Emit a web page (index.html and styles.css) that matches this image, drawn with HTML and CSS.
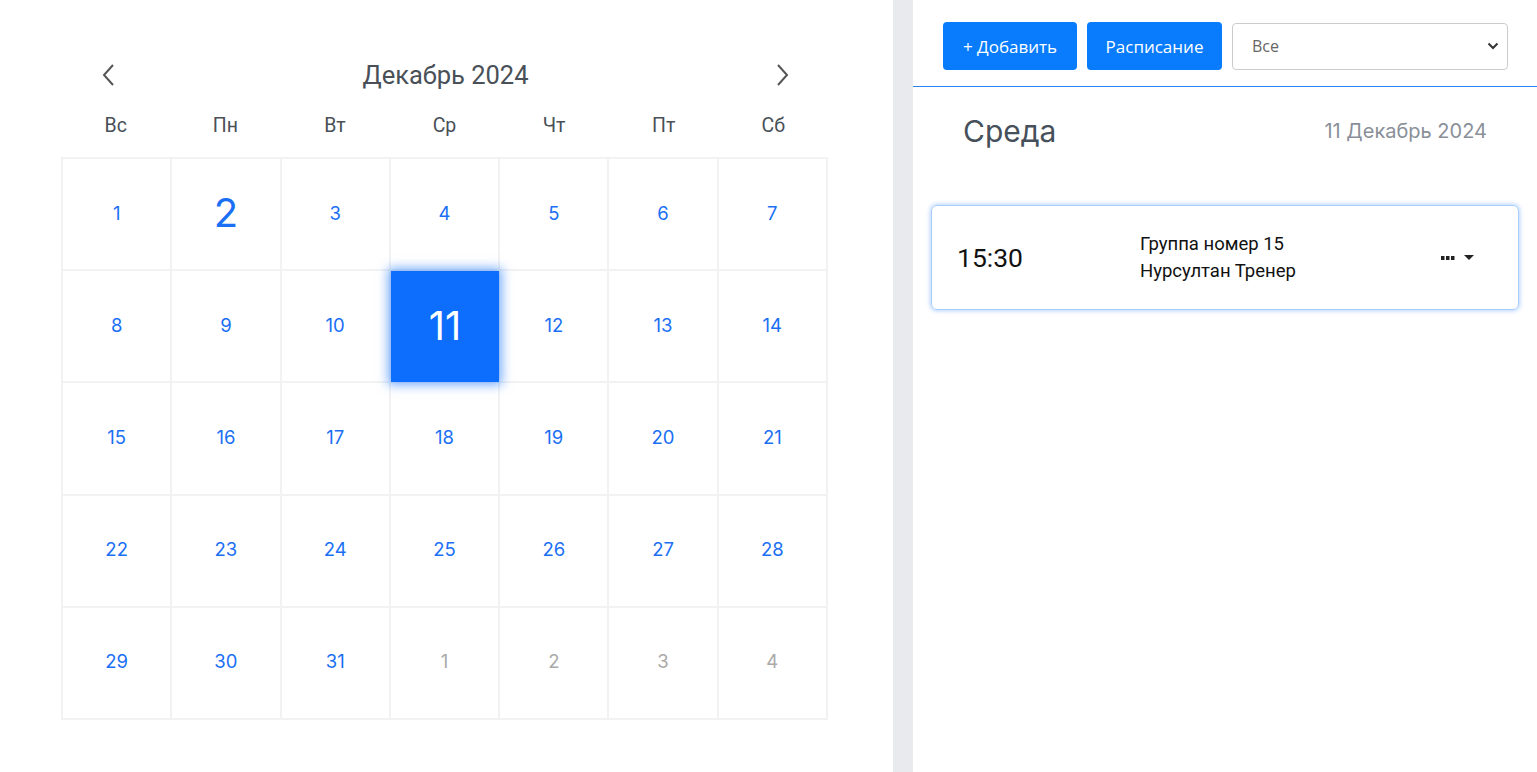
FILE: index.html
```html
<!DOCTYPE html>
<html lang="ru">
<head>
<meta charset="utf-8">
<title>Календарь</title>
<link rel="stylesheet" href="styles.css">
</head>
<body>
<div class="app">
  <section class="left">
    <div class="calendar">
      <div class="cal-head">
        <button class="nav" aria-label="prev"><svg width="16" height="24" viewBox="0 0 16 24"><path d="M12 2 L3 12 L12 22" fill="none" stroke="#555" stroke-width="2"/></svg></button>
        <div class="month">Декабрь 2024</div>
        <button class="nav" aria-label="next"><svg width="16" height="24" viewBox="0 0 16 24"><path d="M4 2 L13 12 L4 22" fill="none" stroke="#555" stroke-width="2"/></svg></button>
      </div>
      <div class="weekdays">
        <div>Вс</div><div>Пн</div><div>Вт</div><div>Ср</div><div>Чт</div><div>Пт</div><div>Сб</div>
      </div>
      <div class="grid">
        <div class="cell">1</div><div class="cell today">2</div><div class="cell">3</div><div class="cell">4</div><div class="cell">5</div><div class="cell">6</div><div class="cell">7</div>
        <div class="cell">8</div><div class="cell">9</div><div class="cell">10</div><div class="cell selected"><span>11</span></div><div class="cell">12</div><div class="cell">13</div><div class="cell">14</div>
        <div class="cell">15</div><div class="cell">16</div><div class="cell">17</div><div class="cell">18</div><div class="cell">19</div><div class="cell">20</div><div class="cell">21</div>
        <div class="cell">22</div><div class="cell">23</div><div class="cell">24</div><div class="cell">25</div><div class="cell">26</div><div class="cell">27</div><div class="cell">28</div>
        <div class="cell">29</div><div class="cell">30</div><div class="cell">31</div><div class="cell other">1</div><div class="cell other">2</div><div class="cell other">3</div><div class="cell other">4</div>
      </div>
    </div>
  </section>
  <div class="divider"></div>
  <section class="right">
    <div class="toolbar">
      <button class="btn">+ Добавить</button>
      <button class="btn">Расписание</button>
      <div class="select">
        <span>Все</span>
        <svg width="12" height="8" viewBox="0 0 12 8"><path d="M1.5 1.5 L6 6 L10.5 1.5" fill="none" stroke="#333" stroke-width="2"/></svg>
      </div>
    </div>
    <div class="day-head">
      <div class="day-name">Среда</div>
      <div class="day-date">11 Декабрь 2024</div>
    </div>
    <div class="event">
      <div class="time">15:30</div>
      <div class="info">
        <div>Группа номер 15</div>
        <div>Нурсултан Тренер</div>
      </div>
      <div class="actions">
        <svg width="14" height="6" viewBox="0 0 14 6"><rect x="0" y="1" width="3.5" height="4" fill="#222"/><rect x="5" y="1" width="3.5" height="4" fill="#222"/><rect x="10" y="1" width="3.5" height="4" fill="#222"/></svg>
        <svg width="10" height="6" viewBox="0 0 10 6"><path d="M0 0 L10 0 L5 5 Z" fill="#222"/></svg>
      </div>
    </div>
  </section>
</div>
</body>
</html>
```
FILE: styles.css
```css
* { box-sizing: border-box; }
html, body { margin: 0; padding: 0; height: 100%; }
body {
  font-family: Inter, "Noto Sans", sans-serif;
  background: #fff;
  overflow: hidden;
}
.app {
  display: flex;
  height: 772px;
  width: 1537px;
}
.left {
  width: 893px;
  flex: none;
  padding: 50px 0 0 61px;
}
.calendar { width: 767px; }
.cal-head {
  display: flex;
  align-items: center;
  justify-content: space-between;
  height: 50px;
  padding: 0 38px 0 40px;
}
.nav {
  border: 0;
  background: none;
  padding: 0;
  width: 16px;
  height: 24px;
  display: flex;
  cursor: pointer;
}
.month {
  font-family: Roboto, "Noto Sans", sans-serif;
  font-size: 25.5px;
  color: #495057;
}
.weekdays {
  display: grid;
  grid-template-columns: repeat(7, 1fr);
  height: 50px;
  margin-bottom: 7px;
  align-items: center;
  font-family: Roboto, "Noto Sans", sans-serif;
  font-size: 19.5px;
  color: #495057;
  text-align: center;
}
.grid {
  display: grid;
  grid-template-columns: repeat(7, 1fr);
  grid-auto-rows: 112.2px;
  border-top: 2px solid #f2f2f2;
  border-left: 2px solid #f2f2f2;
}
.cell {
  border-right: 2px solid #f2f2f2;
  border-bottom: 2px solid #f2f2f2;
  display: flex;
  align-items: center;
  justify-content: center;
  font-size: 18.5px;
  color: #1a6ff5;
  position: relative;
  padding-bottom: 3px;
}
.cell.today { font-size: 40px; font-weight: 400; }
.cell.other { color: #a9a9a9; }
.cell.selected span {
  position: absolute;
  left: 0; top: 0; right: -1px; bottom: -1px;
  background: #0d6efd;
  color: #fff;
  font-size: 40px;
  display: flex;
  align-items: center;
  justify-content: center;
  box-shadow: 0 0 10px 3px rgba(13, 110, 253, 0.55);
  z-index: 2;
  padding-bottom: 3px;
}
.divider {
  width: 20px;
  flex: none;
  background: #e9eaee;
}
.right {
  flex: 1;
  display: flex;
  flex-direction: column;
}
.toolbar {
  display: flex;
  align-items: center;
  gap: 10px;
  padding: 22px 29px 16px 30px;
  border-bottom: 1px solid #2c86f7;
}
.btn {
  height: 48px;
  border: 0;
  border-radius: 4px;
  background: #087cfc;
  color: #fff;
  font-family: "Open Sans", "Noto Sans", sans-serif;
  font-size: 17px;
  padding: 0 10px;
  cursor: pointer;
}
.btn:first-child { width: 134px; }
.btn:nth-child(2) { width: 135px; }
.select {
  flex: 1;
  height: 47px;
  border: 1px solid #ccc;
  border-radius: 4px;
  display: flex;
  align-items: center;
  justify-content: space-between;
  padding: 0 8px 0 19px;
  font-family: "Open Sans", "Noto Sans", sans-serif;
  font-size: 16px;
  color: #666;
}
.day-head {
  display: flex;
  justify-content: space-between;
  padding: 26px 50px 0 50px;
  height: 92px;
  align-items: flex-start;
}
.day-name {
  font-size: 30px;
  color: #46505a;
  line-height: 36px;
}
.day-date {
  font-size: 20px;
  color: #8a9099;
  line-height: 36px;
}
.event {
  margin: 26px 18px 0 18px;
  height: 105px;
  border: 1px solid #a9cdfb;
  border-radius: 6px;
  box-shadow: 0 0 4px 1px rgba(13, 110, 253, 0.3);
  display: flex;
  align-items: center;
  padding: 0 0 0 25px;
}
.time {
  font-family: Roboto, "Noto Sans", sans-serif;
  font-size: 26.5px;
  color: #111;
  width: 183px;
}
.info {
  font-family: Roboto, "Noto Sans", sans-serif;
  font-size: 18.5px;
  color: #111;
  line-height: 27px;
  flex: 1;
}
.actions {
  display: flex;
  align-items: center;
  gap: 9px;
  padding-right: 44px;
}
```
